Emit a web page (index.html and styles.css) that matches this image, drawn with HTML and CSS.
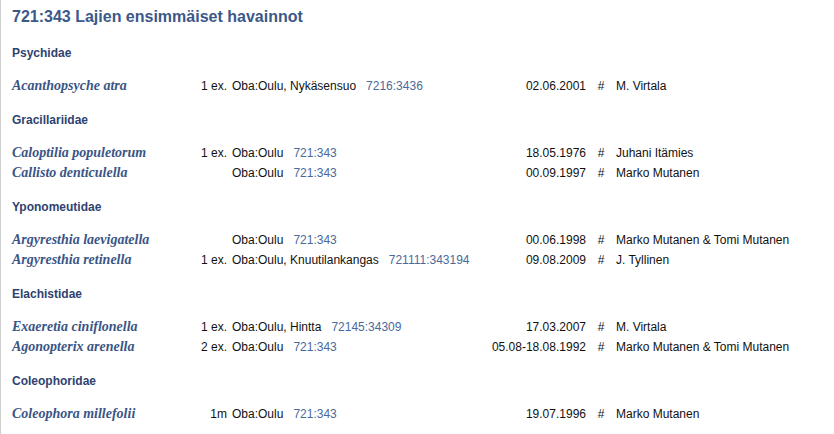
FILE: index.html
```html
<!DOCTYPE html>
<html lang="fi">
<head>
<meta charset="utf-8">
<title>721:343 Lajien ensimmäiset havainnot</title>
<link rel="stylesheet" href="styles.css">
</head>
<body>
<div class="page">
  <h1 class="title">721:343 Lajien ensimmäiset havainnot</h1>

  <section class="family">
    <h2 class="family-name">Psychidae</h2>
    <div class="rows">
      <div class="row"><span class="species">Acanthopsyche atra</span><span class="count">1 ex.</span><span class="place">Oba:Oulu, Nykäsensuo<a class="coord">7216:3436</a></span><span class="date">02.06.2001</span><span class="hash">#</span><span class="obs">M. Virtala</span></div>
    </div>
  </section>

  <section class="family">
    <h2 class="family-name">Gracillariidae</h2>
    <div class="rows">
      <div class="row"><span class="species">Caloptilia populetorum</span><span class="count">1 ex.</span><span class="place">Oba:Oulu<a class="coord">721:343</a></span><span class="date">18.05.1976</span><span class="hash">#</span><span class="obs">Juhani Itämies</span></div>
      <div class="row"><span class="species">Callisto denticulella</span><span class="count"></span><span class="place">Oba:Oulu<a class="coord">721:343</a></span><span class="date">00.09.1997</span><span class="hash">#</span><span class="obs">Marko Mutanen</span></div>
    </div>
  </section>

  <section class="family">
    <h2 class="family-name">Yponomeutidae</h2>
    <div class="rows">
      <div class="row"><span class="species">Argyresthia laevigatella</span><span class="count"></span><span class="place">Oba:Oulu<a class="coord">721:343</a></span><span class="date">00.06.1998</span><span class="hash">#</span><span class="obs">Marko Mutanen &amp; Tomi Mutanen</span></div>
      <div class="row"><span class="species">Argyresthia retinella</span><span class="count">1 ex.</span><span class="place">Oba:Oulu, Knuutilankangas<a class="coord">721111:343194</a></span><span class="date">09.08.2009</span><span class="hash">#</span><span class="obs">J. Tyllinen</span></div>
    </div>
  </section>

  <section class="family">
    <h2 class="family-name">Elachistidae</h2>
    <div class="rows">
      <div class="row"><span class="species">Exaeretia ciniflonella</span><span class="count">1 ex.</span><span class="place">Oba:Oulu, Hintta<a class="coord">72145:34309</a></span><span class="date">17.03.2007</span><span class="hash">#</span><span class="obs">M. Virtala</span></div>
      <div class="row"><span class="species">Agonopterix arenella</span><span class="count">2 ex.</span><span class="place">Oba:Oulu<a class="coord">721:343</a></span><span class="date">05.08-18.08.1992</span><span class="hash">#</span><span class="obs">Marko Mutanen &amp; Tomi Mutanen</span></div>
    </div>
  </section>

  <section class="family">
    <h2 class="family-name">Coleophoridae</h2>
    <div class="rows">
      <div class="row"><span class="species">Coleophora millefolii</span><span class="count">1m</span><span class="place">Oba:Oulu<a class="coord">721:343</a></span><span class="date">19.07.1996</span><span class="hash">#</span><span class="obs">Marko Mutanen</span></div>
    </div>
  </section>
</div>
</body>
</html>
```

FILE: styles.css
```css
html, body {
  margin: 0;
  padding: 0;
  background: #ffffff;
}

body {
  font-family: "Liberation Sans", Arial, sans-serif;
  font-size: 12px;
  color: #111111;
}

.page {
  min-height: 100vh;
  box-sizing: border-box;
  border-left: 1px solid #cfcfcf;
  padding: 8px 0 0 11px;
}

.title {
  margin: 0 0 17px 0;
  font-size: 16px;
  line-height: 18px;
  font-weight: bold;
  color: #3b5888;
}

.family {
  margin: 0 0 14px 0;
}

.family-name {
  margin: 0 0 13px 0;
  font-size: 12px;
  line-height: 20px;
  font-weight: bold;
  color: #2f4270;
}

.row {
  display: grid;
  grid-template-columns: 187px 28px 254px 105px 30px 1fr;
  align-items: baseline;
  height: 20px;
  line-height: 20px;
  white-space: nowrap;
}

.species {
  font-family: "Liberation Serif", "Times New Roman", serif;
  font-style: italic;
  font-weight: bold;
  font-size: 14px;
  color: #3a5585;
}

.count {
  text-align: right;
}

.place {
  padding-left: 5px;
}

.coord {
  margin-left: 10px;
  color: #4a6a9c;
  text-decoration: none;
}

.date {
  text-align: right;
}

.hash {
  text-align: center;
}

.obs {
  color: #111111;
}
```
